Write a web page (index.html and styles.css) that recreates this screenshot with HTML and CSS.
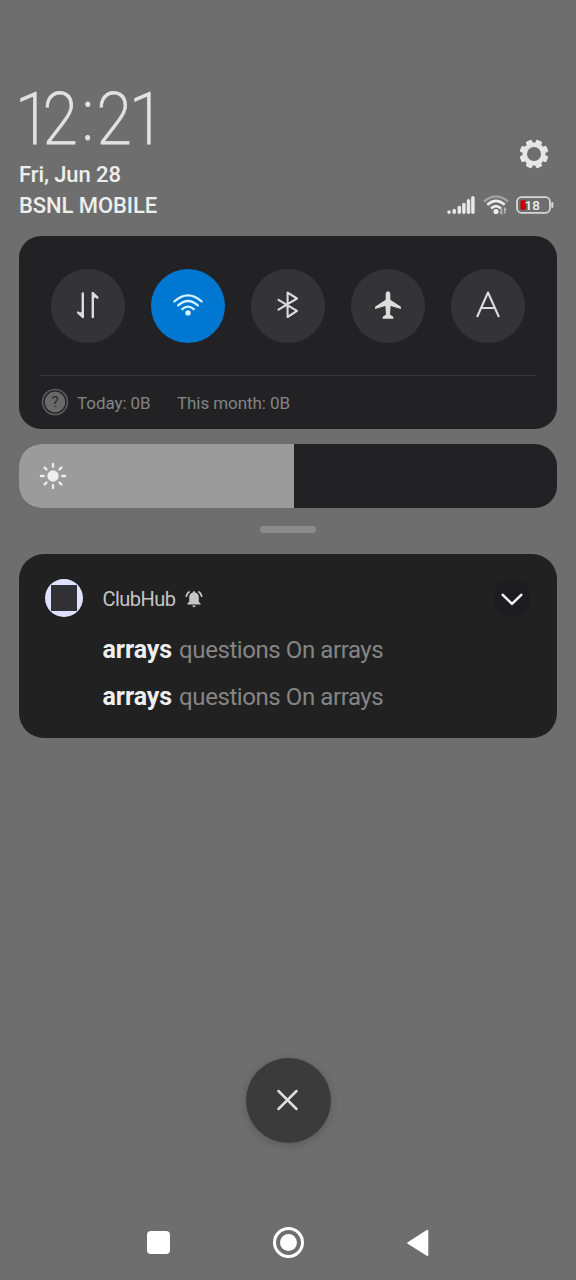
FILE: index.html
```
<!DOCTYPE html>
<html lang="en">
<head>
<meta charset="utf-8">
<meta name="viewport" content="width=device-width, initial-scale=1">
<title>Notification shade</title>
<link rel="stylesheet" href="styles.css">
</head>
<body>
<main class="shade">
  <header class="header">
    <div class="header-text">
      <svg class="clock" viewBox="0 0 150 70"><text transform="scale(.88 1)" y="60 60 55.5 60 60" x="-4.5 26.7 71.2 88 125">12:21</text></svg>
      <div class="date">Fri, Jun 28</div>
      <div class="carrier">BSNL MOBILE</div>
    </div>
    <div class="header-icons">
      <svg class="gear" viewBox="-15 -15 30 30">
        <g fill="#e6e6e6">
          <g><rect x="-3.2" y="-14.4" width="6.4" height="28.8" rx="1.4" transform="rotate(22.5)"/><rect x="-3.2" y="-14.4" width="6.4" height="28.8" rx="1.4" transform="rotate(67.5)"/><rect x="-3.2" y="-14.4" width="6.4" height="28.8" rx="1.4" transform="rotate(112.5)"/><rect x="-3.2" y="-14.4" width="6.4" height="28.8" rx="1.4" transform="rotate(157.5)"/></g>
          <circle r="11.5"/>
        </g>
        <circle r="7" fill="#6e6e6e"/>
      </svg>
      <div class="status">
        <svg class="signal" viewBox="0 0 28 20" stroke="#e8e8e8" stroke-width="3.5" stroke-linecap="round"><path d="M2 17v.2M7.2 15.6v1.6M12.3 12.6v4.6M16.9 9.6v7.6M21.5 5.8v11.4M25.9 2.7v14.5"/></svg>
        <svg class="wifi-small" viewBox="0 0 26 20" fill="none" stroke-width="2.6"><path d="M1 6.6Q13-3.6 25 6.6" stroke="#a0a0a0"/><path d="M4.3 9.8Q13 2 21.7 9.8M8 13.5q5-4.6 10 0" stroke="#ececec"/><circle cx="13" cy="16.5" r="2.6" fill="#ececec"/><path d="M18.6 13.5v4.8l-1.6-1.6M21.7 18.5v-4.8l1.6 1.6" stroke="#b5b5b5" stroke-width="1.6"/></svg>
        <svg class="battery" viewBox="0 0 38 18"><rect x="1" y="1.2" width="33" height="15.6" rx="4.5" fill="none" stroke="#d8d8d8" stroke-width="1.8"/><path d="M36.3 7v4" stroke="#d8d8d8" stroke-width="2" stroke-linecap="round"/><rect x="4.5" y="4.3" width="5.5" height="9.4" rx="1.2" fill="#c80008"/><text x="8.5" y="13.8">18</text></svg>
      </div>
    </div>
  </header>

  <section class="panel">
    <div class="toggles">
      <div class="toggle"><svg viewBox="-20 -20 40 40" fill="none" stroke="#dcdcdc" stroke-width="2.4" stroke-linecap="round" stroke-linejoin="round"><path d="M-5.2-11.5V12L-9.8 7.6M4.8 12V-12L9.4-7.4"/><path d="M-5.2 6v6L-9 8.2zM4.8-6v-6L8.6-8.2z" fill="#dcdcdc" stroke="none"/></svg></div>
      <div class="toggle toggle-on"><svg viewBox="-20 -20 40 40" fill="none" stroke="#d5f4ff" stroke-width="2.2" stroke-linecap="round"><path d="M-13.6-3.6Q0-15.8 13.6-3.6M-9.8.4Q0-8.4 9.8.4M-5.8 4.2Q0-.8 5.8 4.2"/><circle cy="7.9" r="2.7" fill="#d5f4ff" stroke="none"/></svg></div>
      <div class="toggle"><svg viewBox="-20 -20 40 40" fill="none" stroke="#dcdcdc" stroke-width="2.1" stroke-linecap="round" stroke-linejoin="round"><path d="M-9.5-5.2L9 5.8-.4 12V-12.4L9-6.5-9.5 4.7"/></svg></div>
      <div class="toggle"><svg viewBox="-20 -20 40 40" fill="#dcdcdc"><path d="M-2.3-11.2Q-2.2-13.7 0-13.7T2.3-11.2V-5.2L12.6 1.5Q13.3 2 12.8 4L2.6 1 2 9.5 5.3 11.8V13.7H-5.3V11.8L-2 9.5-2.6 1-12.8 4Q-13.3 2-12.6 1.5L-2.3-5.2z"/></svg></div>
      <div class="toggle"><svg viewBox="-20 -20 40 40" fill="none" stroke="#dcdcdc" stroke-width="2.1" stroke-linecap="round" stroke-linejoin="round"><path d="M-10.6 11.2L0-12.5 10.6 11.2M-6.8 3H6.8"/></svg></div>
    </div>
    <div class="usage">
      <svg class="help" viewBox="-14 -14 28 28"><circle r="12.5" fill="none" stroke="#5c5c5d" stroke-width="1.6"/><circle r="10.4" fill="#69696a"/><text y="5" text-anchor="middle">?</text></svg>
      <span class="today">Today: 0B</span><span class="month">This month: 0B</span>
    </div>
  </section>

  <div class="brightness"><div class="brightness-level">
    <svg viewBox="-14 -14 28 28" stroke="#eeeeee" stroke-width="2.3" stroke-linecap="round"><circle r="5.7" fill="#eeeeee" stroke="none"/><path d="M0-9.2v-2.9M0 9.2v2.9M-9.2 0h-2.9M9.2 0h2.9M-8.4-8.4l1.9 1.9M8.4-8.4l-1.9 1.9M-8.4 8.4l1.9-1.9M8.4 8.4l-1.9-1.9"/></svg>
  </div></div>
  <div class="handle"></div>

  <section class="notification">
    <div class="avatar"><div class="avatar-mark"></div></div>
    <div class="notification-body">
      <div class="app"><span class="app-name">ClubHub</span>
        <svg class="bell" viewBox="0 0 18 18"><path d="M9 1.2q1.3 0 1.3 1.4 3.5 1 3.5 4.8v4.3l1.8 1.8v.9H2.4v-.9l1.8-1.8V7.4q0-3.8 3.5-4.8Q7.7 1.2 9 1.2zM7.2 15.5h3.6Q10.6 17.2 9 17.2T7.2 15.5z" fill="#c5c5c5"/><path d="M4.6 1.5Q1.5 3.5 1.2 7M13.4 1.5Q16.5 3.5 16.8 7" fill="none" stroke="#c5c5c5" stroke-width="1.5"/></svg>
      </div>
      <div class="message"><b>arrays</b><span>questions On arrays</span></div>
      <div class="message"><b>arrays</b><span>questions On arrays</span></div>
    </div>
    <div class="expand"><svg viewBox="-19 -19 38 38"><path d="M-9.3-3.2L0 5.8 9.3-3.2" fill="none" stroke="#fff" stroke-width="2.5" stroke-linecap="round"/></svg></div>
  </section>

  <div class="clear"><svg viewBox="-11.5 -11 24 24"><path d="M-9-9L9 9M9-9L-9 9" stroke="#dedede" stroke-width="2.5" stroke-linecap="round"/></svg></div>

  <nav class="nav">
    <div class="recents"></div>
    <div class="home"><div class="home-dot"></div></div>
    <svg class="back" viewBox="0 0 22 28"><path d="M20.3 1.8V26L1.2 14z" fill="#fff" stroke="#fff" stroke-width="2" stroke-linejoin="round"/></svg>
  </nav>
</main>
</body>
</html>
```
FILE: styles.css
```
* { box-sizing: border-box; }
body { margin: 0; background: #6e6e6e; font-family: Roboto, sans-serif; }
svg { display: block; overflow: visible; flex: none; }
.shade { width: 576px; height: 1280px; padding: 84px 19px 0; display: flex; flex-direction: column; }
.header { display: flex; justify-content: space-between; height: 152px; }
.clock { width: 150px; height: 70px; }
.clock text { font-family: Roboto, sans-serif; font-weight: 200; font-size: 73px; fill: #e2e2e2; stroke: #e2e2e2; stroke-width: 0.9px; }
.date, .carrier { font-size: 22px; font-weight: 500; line-height: 31px; color: #eeeeee; white-space: nowrap; letter-spacing: -0.08px; }
.date { padding-top: 5px; }
.header-icons { display: flex; flex-direction: column; align-items: flex-end; padding-top: 55px; }
.gear { width: 30px; height: 30px; margin-right: 8px; }
.status { display: flex; align-items: center; gap: 8px; padding: 25.5px 3px 0 0; }
.signal { width: 28px; height: 20px; }
.wifi-small { width: 26px; height: 20px; margin-right: -1px; }
.battery { width: 38px; height: 18px; }
.battery text { font: 500 13.5px Roboto, sans-serif; fill: #eeeeee; }
.panel { height: 193px; border-radius: 22px; background: #222224; padding: 32.5px 20px 0 21px; }
.toggles { display: flex; justify-content: space-between; padding: 0 12px 0 11px; height: 106.5px; }
.toggle { width: 74px; height: 74px; border-radius: 50%; background: #343436; display: flex; align-items: center; justify-content: center; }
.toggle svg { width: 40px; height: 40px; margin-top: -1px; }
.toggle-on { background: #0078d2; }
.usage { border-top: 1px solid #39393b; display: flex; align-items: center; height: 54px; font-size: 17px; letter-spacing: -0.07px; color: #848484; white-space: nowrap; }
.help { width: 28px; height: 28px; margin: 0 8px 2px 1px; }
.help text { font: 400 15px Roboto, sans-serif; fill: #2d2d2e; }
.today { width: 100px; }
.brightness { height: 64px; margin-top: 15px; border-radius: 22px; background: #222224; overflow: hidden; }
.brightness-level { width: 275px; height: 64px; background: #9b9b9b; padding: 18px 20px; }
.brightness svg { width: 28px; height: 28px; }
.handle { width: 56px; height: 7px; border-radius: 4px; background: #8b8b8b; margin: 18px auto 0; flex: none; }
.notification { height: 184px; margin-top: 21px; border-radius: 25px; background: #212121; padding: 25px 26px 0; display: flex; }
.avatar { width: 38px; height: 38px; border-radius: 50%; background: #dfe2ff; display: flex; align-items: center; justify-content: center; }
.avatar-mark { width: 26px; height: 26px; background: #313136; }
.notification-body { flex: 1; padding-left: 19.5px; }
.app { display: flex; align-items: center; height: 40px; font-size: 20px; letter-spacing: -0.55px; color: #c5c5c5; }
.bell { width: 18px; height: 18px; margin-left: 10px; }
.message { display: flex; align-items: baseline; height: 47px; line-height: 32px; padding-top: 15px; font-size: 24px; letter-spacing: -0.42px; color: #858585; white-space: nowrap; }
.message b { font-weight: 700; font-size: 25px; letter-spacing: -0.05px; color: #eeeeee; margin-right: 7px; }
.expand { width: 38px; height: 38px; border-radius: 50%; background: #1c1c21; }
.expand svg { width: 38px; height: 38px; }
.clear { width: 85px; height: 85px; border-radius: 50%; background: #3b3b3b; box-shadow: 0 2px 9px #0003; margin: 320px auto 0; flex: none; display: flex; align-items: center; justify-content: center; }
.clear svg { width: 24px; height: 24px; }
.nav { display: flex; align-items: center; justify-content: space-between; padding: 0 128px; margin-top: 84px; }
.recents { width: 23px; height: 23px; border-radius: 4px; background: #fff; }
.home { width: 31px; height: 31px; border: 3px solid #fff; border-radius: 50%; display: flex; align-items: center; justify-content: center; }
.home-dot { width: 17px; height: 17px; border-radius: 50%; background: #fff; }
.back { width: 22px; height: 28px; }
```
